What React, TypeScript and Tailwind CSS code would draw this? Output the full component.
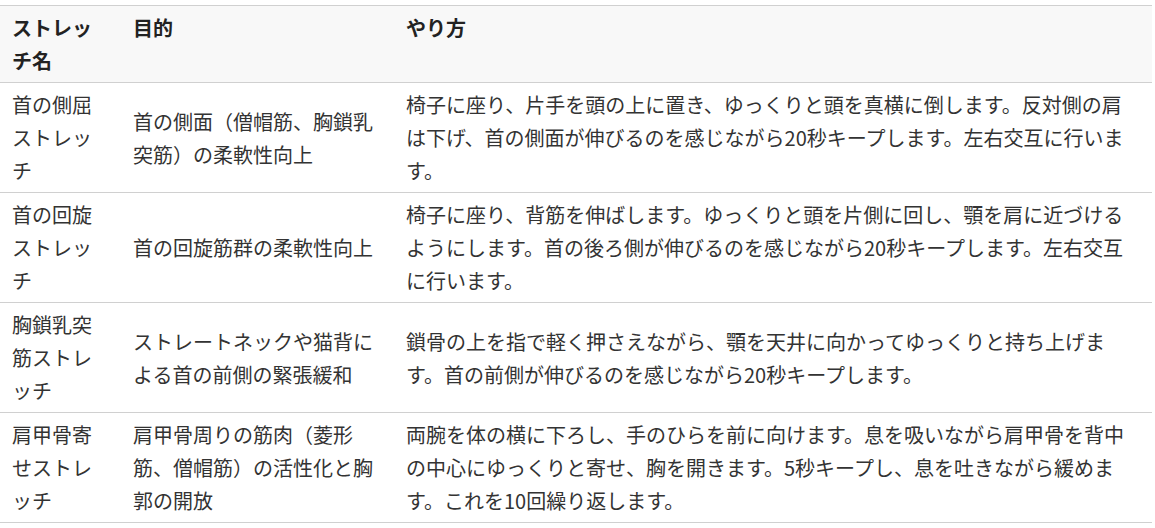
import React from "react";

const rows = [
  {
    name: "首の側屈ストレッチ",
    purpose: "首の側面（僧帽筋、胸鎖乳突筋）の柔軟性向上",
    how: "椅子に座り、片手を頭の上に置き、ゆっくりと頭を真横に倒します。反対側の肩は下げ、首の側面が伸びるのを感じながら20秒キープします。左右交互に行います。",
  },
  {
    name: "首の回旋ストレッチ",
    purpose: "首の回旋筋群の柔軟性向上",
    how: "椅子に座り、背筋を伸ばします。ゆっくりと頭を片側に回し、顎を肩に近づけるようにします。首の後ろ側が伸びるのを感じながら20秒キープします。左右交互に行います。",
  },
  {
    name: "胸鎖乳突筋ストレッチ",
    purpose: "ストレートネックや猫背による首の前側の緊張緩和",
    how: "鎖骨の上を指で軽く押さえながら、顎を天井に向かってゆっくりと持ち上げます。首の前側が伸びるのを感じながら20秒キープします。",
  },
  {
    name: "肩甲骨寄せストレッチ",
    purpose: "肩甲骨周りの筋肉（菱形筋、僧帽筋）の活性化と胸郭の開放",
    how: "両腕を体の横に下ろし、手のひらを前に向けます。息を吸いながら肩甲骨を背中の中心にゆっくりと寄せ、胸を開きます。5秒キープし、息を吐きながら緩めます。これを10回繰り返します。",
  },
];

export default function App() {
  return (
    <div className="bg-white pt-[5px] font-['Noto_Sans_CJK_JP','Noto_Sans',sans-serif] text-[20px] leading-[33px] text-[#333]">
      <table className="w-[1152px] table-fixed border-collapse">
        <colgroup>
          <col className="w-[121px]" />
          <col className="w-[273px]" />
          <col />
        </colgroup>
        <thead>
          <tr className="border-y border-[#d0d0d0] bg-[#f8f8f8] text-[#222]">
            <th className="px-3 py-[5px] text-left align-top font-bold">ストレッチ名</th>
            <th className="px-3 py-[5px] text-left align-top font-bold">目的</th>
            <th className="px-3 py-[5px] text-left align-top font-bold">やり方</th>
          </tr>
        </thead>
        <tbody>
          {rows.map((r) => (
            <tr key={r.name} className="border-b border-[#d0d0d0]">
              <td className="px-3 py-[5px] align-middle">{r.name}</td>
              <td className="px-3 py-[5px] align-middle">{r.purpose}</td>
              <td className="px-3 py-[5px] align-middle">{r.how}</td>
            </tr>
          ))}
        </tbody>
      </table>
    </div>
  );
}
